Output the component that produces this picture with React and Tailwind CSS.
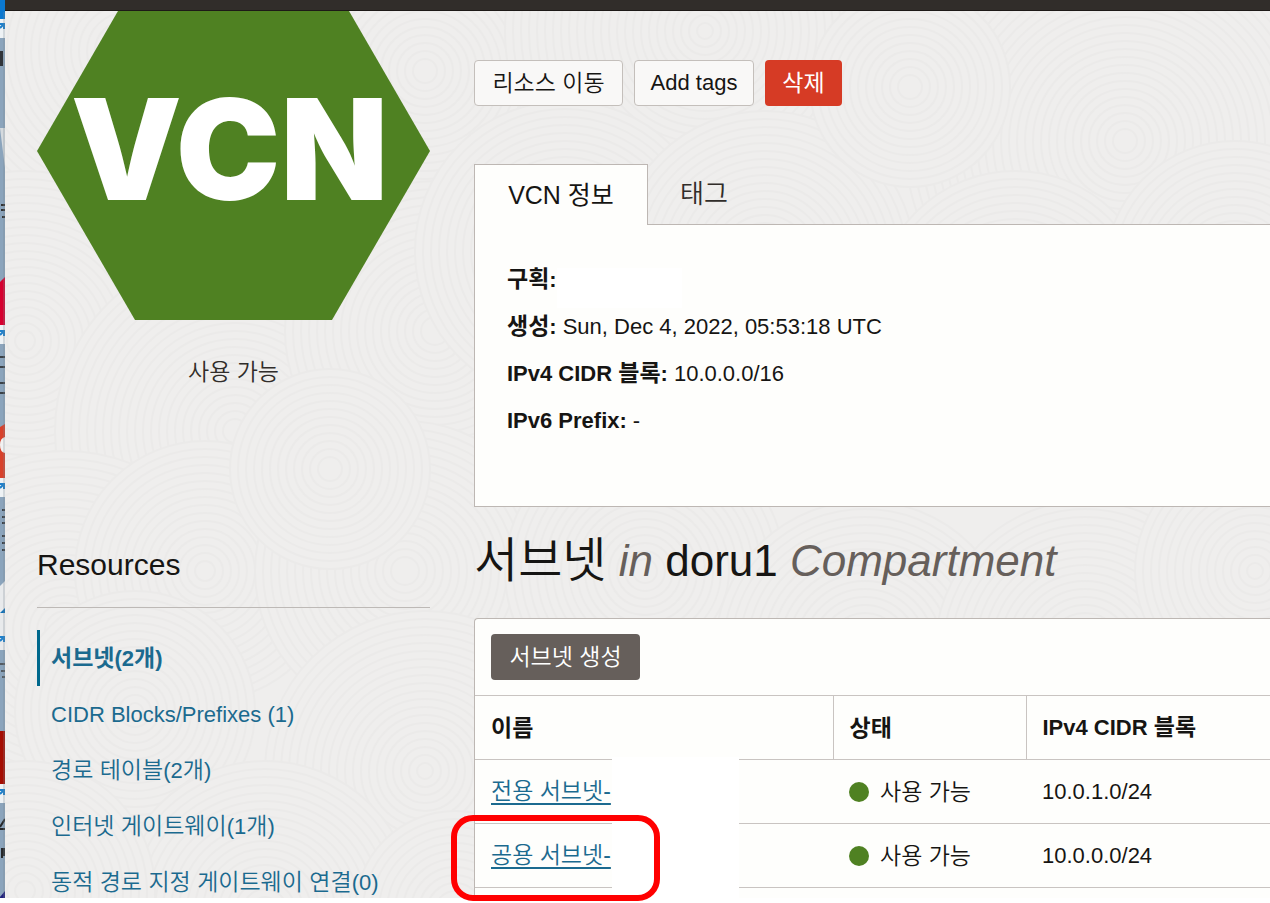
import React from 'react';

const ACTIONS = [
  { label: '리소스 이동', className: 'w-[149px] text-[23px] font-[350] border border-[#c4bfbb] bg-[#f9f8f7] text-[#161513]' },
  { label: 'Add tags', className: 'w-[120px] text-[22px] border border-[#c4bfbb] bg-[#f9f8f7] text-[#161513]' },
  { label: '삭제', className: 'w-[77px] text-[23px] bg-[#d63b25] text-white' }
];

const RESOURCES = [
  { name: '서브넷', count: '(2', unit: '개', end: ')', active: true },
  { name: '', count: 'CIDR Blocks/Prefixes (1)' },
  { name: '경로 테이블', count: '(2', unit: '개', end: ')' },
  { name: '인터넷 게이트웨이', count: '(1', unit: '개', end: ')' },
  { name: '동적 경로 지정 게이트웨이 연결', count: '(0)' }
];

const SUBNETS = [
  { name: '전용 서브넷-', state: '사용 가능', cidr: '10.0.1.0/24' },
  { name: '공용 서브넷-', state: '사용 가능', cidr: '10.0.0.0/24' }
];

// [x, y, radius] of each ring group in the page texture, later ones lie on top
const RINGS = [
  [120, 40, 190], [420, 60, 180], [700, 20, 200], [1120, 130, 220],
  [20, 330, 170], [230, 420, 180], [430, 320, 150], [560, 240, 150],
  [760, 250, 150], [1010, 300, 140], [1230, 260, 130], [905, 76, 100],
  [60, 620, 180], [200, 560, 130], [400, 560, 150], [640, 560, 140],
  [860, 640, 150], [1080, 640, 150], [1250, 560, 120], [325, 458, 100],
  [130, 700, 120], [420, 760, 160], [260, 900, 150], [20, 880, 130], [450, 900, 100]
];

function Texture() {
  return (
    <svg className="absolute inset-0 h-full w-full" aria-hidden="true">
      {RINGS.map(([x, y, radius], i) => (
        <g key={i} stroke="#ebeae9" strokeWidth="2">
          {Array.from({ length: Math.floor(radius / 8) }, (_, n) => (
            <circle key={n} cx={x} cy={y} r={radius - n * 8} fill={n === 0 ? '#efeeed' : 'none'} />
          ))}
        </g>
      ))}
    </svg>
  );
}

// Sliver of the desktop behind the browser window
function Desktop() {
  return (
    <svg className="h-full w-[5px] shrink-0 bg-[#8ba4bc]" aria-hidden="true">
      <rect width="5" height="19" fill="#0b78d0" />
      <rect y="19" width="5" height="19" fill="#eef2f5" />
      <rect y="51" width="3" height="15" fill="#30343a" />
      <path d="M0 128h5v40z" fill="#d5dade" />
      <path d="M1 205h4M1 210h4M2 217h3" stroke="#333" strokeWidth="2" />
      <path d="M5 277L0 282v43h5z" fill="#d6002f" />
      <rect y="325" width="5" height="19" fill="#eef2f5" />
      <path d="M0 357h5M0 367h5M0 383h5M0 393h5" stroke="#3c4248" strokeWidth="2" />
      <path d="M5 424L0 427v51h5z" fill="#d8412b" />
      <path d="M5 437q-5 1-5 8t5 8z" fill="#f2f2f2" />
      <rect y="478" width="5" height="19" fill="#eef2f5" />
      <path d="M2 510h3M2 517h3M2 523h3M2 536h3M2 543h3M2 550h3" stroke="#3c4248" strokeWidth="2" />
      <path d="M5 581L0 586v64h5z" fill="#e8eaec" />
      <path d="M5 608L0 613h5z" fill="#1071b8" />
      <path d="M0 664h5M1 671h4M2 677h3" stroke="#555c63" strokeWidth="2" />
      <rect y="731" width="5" height="53" fill="#a50d02" />
      <rect y="784" width="5" height="19" fill="#eef2f5" />
      <path d="M0 827l5-8M0 829h5M2 848v10M4 848v8" stroke="#26282b" strokeWidth="2" fill="none" />
      <path d="M0 897l5-6v7H0z" fill="#20207c" />
      {[22, 329, 482, 635, 788].map(y => (
        <path key={y} d={`M0 ${y + 2}h4v5M4 ${y + 2}L0 ${y + 6}`} stroke="#1f80cb" strokeWidth="2" fill="none" />
      ))}
      <path d="M4 12v886" stroke="#7c8790" strokeOpacity=".5" />
    </svg>
  );
}

function Sidebar() {
  return (
    <aside className="w-[393px] shrink-0">
      <div className="relative">
        <svg viewBox="0 0 393 309" className="block w-full" aria-hidden="true">
          <path d="M81 0H312L393 140L295 309H98L0 140Z" fill="#4f8122" />
        </svg>
        <span className="absolute inset-x-0 top-[58px] pr-2 text-center font-[Inter,sans-serif] text-[140px] leading-[160px] font-black text-white">VCN</span>
      </div>
      <p className="mt-9 text-center text-[23px] leading-8 font-[350]">사용 가능</p>

      <h2 className="mt-[154px] border-b border-[#bdb9b6] pb-[19px] text-[30px] leading-[46px] text-[#161513]">Resources</h2>
      <nav className="mt-[22px]">
        {RESOURCES.map(item => (
          <a key={item.name} href="#subnets"
            className={`flex h-14 items-center border-l-3 pl-[11px] text-[22px] leading-8 whitespace-nowrap text-[#1b6a8f] ${
              item.active ? 'border-[#00688c] font-bold' : 'border-transparent font-[350]'
            }`}>
            <span>
              <span className="text-[23px]">{item.name}</span>{item.count}
              {item.unit && <span className="text-[23px]">{item.unit}</span>}{item.end}
            </span>
          </a>
        ))}
      </nav>
    </aside>
  );
}

function VcnInfo() {
  return (
    <section>
      <div role="tablist" className="flex">
        <button role="tab" aria-selected="true"
          className="relative z-10 -mb-px h-[61px] w-[174px] border border-b-0 border-[#bdb7b3] bg-[#fefefc] text-[25px] leading-8 text-[#161513]">
          VCN 정보
        </button>
        <button role="tab" aria-selected="false" className="h-[60px] px-8 text-[26px] leading-8 font-[350] text-[#312d2a]">태그</button>
      </div>
      <dl className="relative h-[283px] border border-r-0 border-[#bdb7b3] bg-[#fefefc] pt-[31px] pl-8 text-[22px] leading-[47px] text-[#161513]">
        <div className="flex gap-1.5">
          <dt className="font-bold"><span className="text-[23px]">구획</span>:</dt>
          <dd className="absolute top-[43px] left-[82px] h-10 w-[125px] bg-white" />
        </div>
        <div className="flex gap-1.5">
          <dt className="font-bold"><span className="text-[23px]">생성</span>:</dt>
          <dd>Sun, Dec 4, 2022, 05:53:18 UTC</dd>
        </div>
        <div className="flex gap-1.5">
          <dt className="font-bold">IPv4 CIDR <span className="text-[23px]">블록</span>:</dt>
          <dd>10.0.0.0/16</dd>
        </div>
        <div className="flex gap-1.5">
          <dt className="font-bold">IPv6 Prefix:</dt>
          <dd>-</dd>
        </div>
      </dl>
    </section>
  );
}

function Subnets() {
  return (
    <section id="subnets">
      <h1 className="flex h-[111px] items-center pb-1 text-[44px] leading-[60px] whitespace-pre text-[#161513]">
        <span className="text-[48px] font-[350]">서브넷</span>
        <em className="text-[#665f5b]"> in </em>doru1<em className="text-[#665f5b]"> Compartment</em>
      </h1>
      <div className="relative rounded-tl border-t border-l border-[#bdb7b3] bg-[#fefefc] pb-8">
        <div className="px-4 py-[15px]">
          <button className="block h-[46px] w-[149px] rounded bg-[#665f5b] text-[23px] leading-8 font-[350] text-white">서브넷 생성</button>
        </div>
        <table className="w-full table-fixed border-collapse text-left text-[22px] leading-8 text-[#161513]">
          <thead>
            <tr className="h-16 border-y border-[#c9c4c1]">
              <th scope="col" className="w-[358px] border-r border-[#c9c4c1] pl-4 text-[23px]">이름</th>
              <th scope="col" className="w-[193px] border-r border-[#c9c4c1] pl-4 text-[23px]">상태</th>
              <th scope="col" className="pl-4">IPv4 CIDR <span className="text-[23px]">블록</span></th>
            </tr>
          </thead>
          <tbody>
            {SUBNETS.map(subnet => (
              <tr key={subnet.cidr} className="h-16 border-b border-[#c9c4c1]">
                <td className="pl-4">
                  <a href="#subnets" className="text-[23px] font-[350] text-[#1b6a8f] underline decoration-2 underline-offset-4">{subnet.name}</a>
                </td>
                <td className="pl-4">
                  <span className="flex items-center gap-[11px] text-[23px] font-[350]">
                    <span className="size-5 rounded-full bg-[#4f8122]" />{subnet.state}
                  </span>
                </td>
                <td className="pl-4">{subnet.cidr}</td>
              </tr>
            ))}
          </tbody>
        </table>
        <div className="absolute top-[138px] bottom-0 left-[137px] w-[127px] bg-white" />
      </div>
    </section>
  );
}

export default function App() {
  return (
    <div className="relative h-screen overflow-hidden bg-white pb-[5px] font-['Liberation_Sans','Noto_Sans_CJK_KR',sans-serif] text-[#312d2a]">
      <div className="flex h-full overflow-hidden">
        <Desktop />
        <div className="min-w-0 flex-1 overflow-hidden bg-[#efeeed]">
          <header className="h-[11px] border-b border-[#1d1917] bg-[#312d2a]" />
          <div className="relative flex h-full gap-11 pl-8">
            <Texture />
            <div className="relative"><Sidebar /></div>
            <main className="relative min-w-0 flex-1 pt-[49px]">
              <div className="mb-[58px] flex gap-[11px]">
                {ACTIONS.map(action => (
                  <button key={action.label} className={`h-[46px] rounded leading-8 ${action.className}`}>{action.label}</button>
                ))}
              </div>
              <VcnInfo />
              <Subnets />
            </main>
          </div>
        </div>
      </div>
      <div className="pointer-events-none absolute top-[815px] left-[451px] h-[86px] w-[209px] rounded-[22px] border-6 border-[#ff0000]" />
    </div>
  );
}
